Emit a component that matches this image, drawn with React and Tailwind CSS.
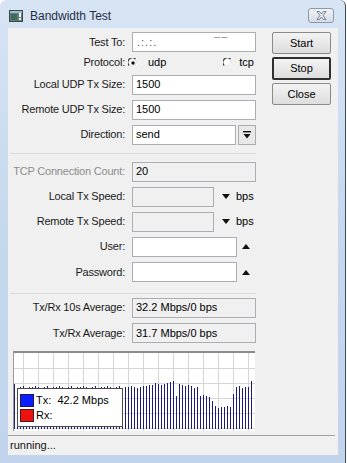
import React from 'react';

// bar tops (page y) for the Tx graph, sampled from the window
function barTop(x) {
  if (x < 17) return 383;
  if (x < 145) return 386;
  if (x < 153) return 384;
  if (x < 168) return 383;
  if (x < 176) return 380;
  if (x < 179) return 395;
  if (x < 190) return 384;
  if (x < 200) return 386;
  if (x < 211) return 395;
  if (x < 215) return 400;
  if (x < 233) return 406;
  if (x < 236) return 392;
  if (x < 251) return 386;
  return 381;
}

const jitter = [0, 1, 0, -1, 1, 0, 0, -1];
const bars = Array.from({ length: 80 }, (_, k) => {
  const x = 14 + 3 * k;
  return { x: x - 13, top: barTop(x) - 350 + jitter[k % jitter.length] };
});

function Label({ children, muted }) {
  return (
    <div className={`w-[117px] shrink-0 text-right tracking-[-0.2px] ${muted ? 'text-[#8d8d8d]' : 'text-[#1a1a1a]'}`}>
      {children}
    </div>
  );
}

function Box({ value, width = 'w-[124px]', disabled }) {
  return (
    <div
      className={`${width} h-[20px] ml-[7px] border border-[#abadb3] flex items-center pl-[3px] text-black ${
        disabled ? 'bg-[#f0f0f0]' : 'bg-white'
      }`}
    >
      {value}
    </div>
  );
}

function Row({ label, muted, h = 'h-[25px]', children }) {
  return (
    <div className={`${h} flex items-center`}>
      <Label muted={muted}>{label}</Label>
      {children}
    </div>
  );
}

function Radio({ checked }) {
  return (
    <svg width="10" height="10" viewBox="0 0 10 10">
      <circle cx="5" cy="5" r="4.5" fill="#fff" />
      <path d="M1.2 7.5 A4.3 4.3 0 0 1 7.5 1.2" stroke="#404040" strokeWidth="1.3" fill="none" />
      <path d="M7.8 2 A4.3 4.3 0 0 1 2 7.8" stroke="#d8d8d8" strokeWidth="1" fill="none" />
      {checked && <circle cx="5" cy="5" r="1.7" fill="#111" />}
    </svg>
  );
}

function Tri({ up }) {
  return (
    <svg width="8" height="5" viewBox="0 0 8 5">
      <path d={up ? 'M0 5 L4 0 L8 5 Z' : 'M0 0 L8 0 L4 5 Z'} fill="#111" />
    </svg>
  );
}

function Button({ children, main }) {
  return (
    <div
      className={`w-[59px] flex items-center justify-center rounded-[2px] bg-gradient-to-b from-[#f3f3f3] to-[#dddddd] ${
        main ? 'h-[23px] border-2 border-[#2f2f2f]' : 'h-[22px] border border-[#8a8a8a]'
      }`}
    >
      {children}
    </div>
  );
}

function Sep() {
  return <div className="ml-[2px] w-[246px] h-px bg-[#dadada]" />;
}

function Graph() {
  return (
    <div className="relative ml-[5px] mt-[5px] w-[242px] h-[80px]">
      <svg width="242" height="80" viewBox="0 0 242 80" className="block">
        <rect x="0" y="0" width="242" height="80" fill="#fff" />
        {Array.from({ length: 16 }, (_, i) => (
          <rect key={'v' + i} x={10 + 15 * i} y="0" width="1" height="80" fill="#d6d6d6" />
        ))}
        {[17, 32, 47, 62, 77].map((y) => (
          <rect key={'h' + y} x="0" y={y} width="242" height="1" fill="#d6d6d6" />
        ))}
        {bars.map((b) => (
          <rect key={b.x} x={b.x} y={b.top} width="1" height={78 - b.top} fill="#1b1b7c" />
        ))}
        <rect x="0" y="0" width="242" height="2" fill="#8a8a8a" />
        <rect x="0" y="0" width="1" height="80" fill="#9a9a9a" />
      </svg>
      <div className="absolute left-[4px] top-[37px] w-[106px] h-[39px] bg-white border border-[#4a4a4a] flex flex-col justify-center gap-[2px] pl-[2px]">
        <div className="flex items-center gap-[2px]">
          <div className="w-[14px] h-[13px] bg-[#0a1eff] border border-[#1a1a4a]" />
          <span>Tx:&nbsp; 42.2 Mbps</span>
        </div>
        <div className="flex items-center gap-[2px]">
          <div className="w-[14px] h-[13px] bg-[#ee1111] border border-[#4a1a1a]" />
          <span>Rx:</span>
        </div>
      </div>
    </div>
  );
}

export default function App() {
  return (
    <div className="w-[347px] h-[463px] bg-white font-['Liberation_Sans',Arial,sans-serif] text-[11px] leading-none">
      <div className="w-[346px] h-[463px] flex flex-col rounded-t-[6px] border-r border-[#3d4b5e] bg-gradient-to-b from-[#d7e4f4] via-[#c6d8ee] to-[#c1d4ec]">
        {/* title bar */}
        <div className="h-[28px] shrink-0 flex items-center">
          <svg width="14" height="12" viewBox="0 0 14 12" className="ml-[9px] mt-[3px]">
            <rect x="0.5" y="0.5" width="13" height="11" fill="#5f7f74" stroke="#3a4c48" />
            <rect x="1" y="1" width="12" height="2" fill="#9fb9d8" />
            <rect x="2" y="4" width="6" height="6" fill="#3f6a5b" />
            <rect x="10" y="3" width="2" height="4" fill="#fff" />
            <rect x="10" y="8" width="2" height="2" fill="#fff" />
          </svg>
          <span className="ml-[7px] mt-[4px] text-[12px] text-[#1f2f44]">Bandwidth Test</span>
          <div className="ml-auto mr-[11px] mt-[2px] w-[26px] h-[15px] rounded-[3px] border border-[#8c99ab] bg-gradient-to-b from-[#f0f3f7] to-[#d5dce6] flex items-center justify-center">
            <svg width="11" height="9" viewBox="0 0 11 9">
              <path
                d="M1 0.5 L3.5 0.5 L5.5 3 L7.5 0.5 L10 0.5 L7 4.5 L10 8.5 L7.5 8.5 L5.5 6 L3.5 8.5 L1 8.5 L4 4.5 Z"
                fill="#e9edf2"
                stroke="#6a7686"
                strokeWidth="0.9"
              />
            </svg>
          </div>
        </div>

        {/* client area */}
        <div className="ml-[8px] w-[330px] h-[427px] bg-[#f0f0f0] flex flex-col">
          <div className="flex">
            <div className="w-[256px] pt-[3px] flex flex-col">
              <Row label="Test To:" h="h-[22px]">
                <div className="w-[124px] h-[20px] ml-[7px] border border-[#abadb3] bg-white flex items-center pl-[4px] text-[#555] tracking-[1px]">
                  .:.:.&nbsp;&nbsp;&nbsp;&nbsp;&nbsp;&nbsp;&nbsp;&nbsp;&nbsp;&nbsp;&nbsp;&nbsp;&nbsp;&nbsp;¯¯
                </div>
              </Row>
              <Row label="Protocol:" h="h-[19px]">
                <div className="ml-[3px] flex items-center w-[128px]">
                  <Radio checked />
                  <span className="ml-[10px]">udp</span>
                  <div className="ml-auto flex items-center">
                    <Radio />
                    <span className="ml-[6px] mr-[2px]">tcp</span>
                  </div>
                </div>
              </Row>
              <Row label="Local UDP Tx Size:">
                <Box value="1500" />
              </Row>
              <Row label="Remote UDP Tx Size:">
                <Box value="1500" />
              </Row>
              <Row label="Direction:">
                <Box value="send" width="w-[104px]" />
                <div className="ml-[2px] w-[18px] h-[20px] border border-[#acacac] bg-[#e8e8e8] flex items-center justify-center">
                  <svg width="8" height="8" viewBox="0 0 8 8">
                    <rect x="0" y="0" width="8" height="1.4" fill="#111" />
                    <path d="M0.5 3 L7.5 3 L4 7.5 Z" fill="#111" />
                  </svg>
                </div>
              </Row>
              <div className="h-[12px] flex items-center">
                <Sep />
              </div>
              <Row label="TCP Connection Count:" muted>
                <Box value="20" disabled />
              </Row>
              <Row label="Local Tx Speed:">
                <Box value="" width="w-[82px]" disabled />
                <div className="ml-[8px]"><Tri /></div>
                <span className="ml-[6px]">bps</span>
              </Row>
              <Row label="Remote Tx Speed:">
                <Box value="" width="w-[82px]" disabled />
                <div className="ml-[8px]"><Tri /></div>
                <span className="ml-[6px]">bps</span>
              </Row>
              <Row label="User:">
                <Box value="" width="w-[105px]" />
                <div className="ml-[5px]"><Tri up /></div>
              </Row>
              <Row label="Password:" h="h-[26px]">
                <Box value="" width="w-[105px]" />
                <div className="ml-[5px]"><Tri up /></div>
              </Row>
              <div className="h-[10px] flex items-end pb-[1px]">
                <Sep />
              </div>
              <Row label="Tx/Rx 10s Average:">
                <Box value="32.2 Mbps/0 bps" disabled />
              </Row>
              <Row label="Tx/Rx Average:" h="h-[26px]">
                <Box value="31.7 Mbps/0 bps" disabled />
              </Row>
              <Graph />
            </div>
            <div className="ml-[8px] pt-[4px] flex flex-col gap-[3px]">
              <Button>Start</Button>
              <Button main>Stop</Button>
              <Button>Close</Button>
            </div>
          </div>
          <div className="mt-auto h-[20px] mr-[3px] border-t border-[#a0a0a0] flex items-center pl-[2px] text-[#111]">
            running...
          </div>
        </div>
      </div>
    </div>
  );
}
